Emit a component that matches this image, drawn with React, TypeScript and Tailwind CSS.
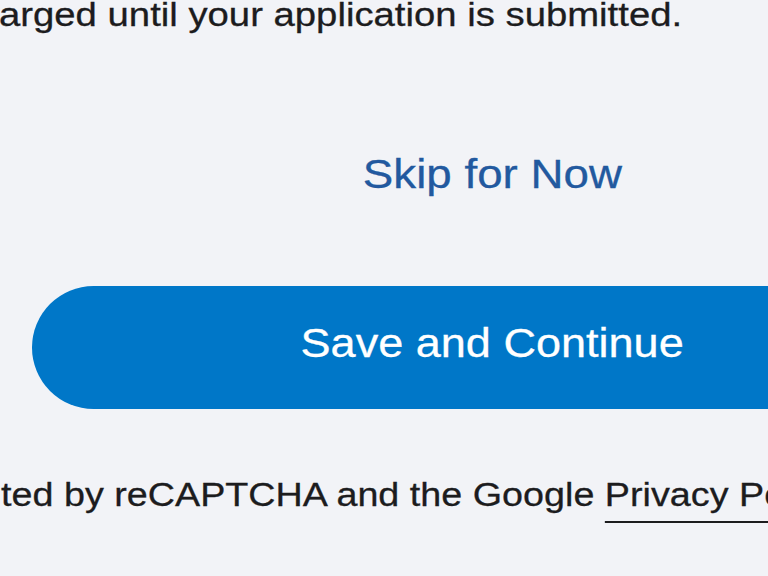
export default function App() {
  return (
    <div
      className="h-[576px] w-[768px] overflow-hidden bg-[#f2f3f7] text-[#1c1c1e] [-webkit-text-stroke:0.3px]"
      style={{ fontFamily: '"Liberation Sans", Arial, sans-serif' }}
    >
      {/* Notice about charges, clipped at the left edge */}
      <p className="mt-[-6px] ml-[-1px] whitespace-nowrap text-[34px] leading-[40px]">
        <span className="inline-block origin-left scale-x-[1.126]">arged until your application is submitted.</span>
      </p>

      {/* Actions */}
      <div className="ml-[32px] w-[921px]">
        <div className="mt-[116px] text-center text-[40px] leading-[48px] text-[#22599f]">
          <a href="#" className="inline-block origin-center scale-x-[1.143]">Skip for Now</a>
        </div>
        <button
          type="button"
          className="mt-[88px] flex h-[123px] w-full justify-center rounded-full bg-[#0077c8] pt-[33px] text-[40px] leading-[48px] text-white"
        >
          <span className="inline-block origin-center scale-x-[1.126]">Save and Continue</span>
        </button>
      </div>

      {/* reCAPTCHA disclaimer, clipped at both edges */}
      <p className="mt-[66px] ml-[1px] whitespace-nowrap text-[33px] leading-[40px]">
        <span className="inline-block origin-left scale-x-[1.143]">
          ted by reCAPTCHA and the Google{' '}
          <a href="#" className="underline decoration-2 underline-offset-[15px]">
            Privacy Policy
          </a>{' '}
          and Terms of Service apply.
        </span>
      </p>
    </div>
  );
}
